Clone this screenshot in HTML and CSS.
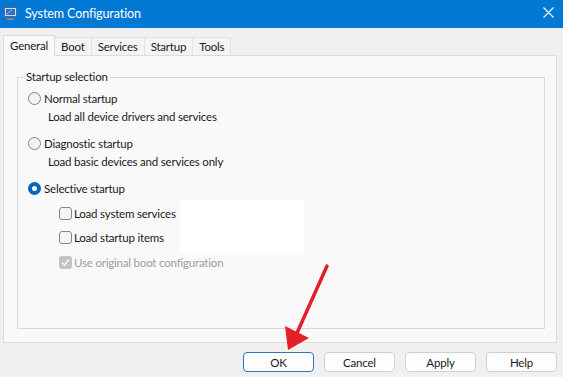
FILE: index.html
```html
<!DOCTYPE html>
<html lang="en">
<head>
    <meta charset="UTF-8">
    <meta name="viewport" content="width=device-width, initial-scale=1.0">
    <title>System Configuration</title>
    <link rel="stylesheet" href="styles.css">
</head>
<body>
    <div class="window">
        <div class="titlebar">
            <svg class="app-icon" width="13" height="13" viewBox="0 0 13 13">
                <rect x="0.5" y="0.5" width="12" height="9" rx="1" fill="#d7dde6" stroke="#56657a"/>
                <rect x="2" y="2" width="9" height="6" fill="#2b6fd6"/>
                <path d="M3 7 L8 3" stroke="#9cc4ff" stroke-width="1"/>
                <rect x="5" y="10" width="3" height="1.5" fill="#56657a"/>
                <rect x="3" y="11.5" width="7" height="1.5" fill="#8793a3"/>
            </svg>
            <span class="title">System Configuration</span>
            <svg class="close" width="11" height="11" viewBox="0 0 11 11">
                <path d="M0.5 0.5 L10.5 10.5 M10.5 0.5 L0.5 10.5" stroke="#fff" stroke-width="1.1"/>
            </svg>
        </div>

        <div class="tabs">
            <div class="tab active">General</div>
            <div class="tab">Boot</div>
            <div class="tab">Services</div>
            <div class="tab">Startup</div>
            <div class="tab">Tools</div>
        </div>

        <div class="panel">
            <fieldset class="group">
                <legend>Startup selection</legend>

                <div class="option first"><span class="radio"></span>Normal startup</div>
                <div class="option-desc">Load all device drivers and services</div>

                <div class="option"><span class="radio"></span>Diagnostic startup</div>
                <div class="option-desc">Load basic devices and services only</div>

                <div class="option"><span class="radio checked"></span>Selective startup</div>

                <div class="check first"><span class="box"></span>Load system services</div>
                <div class="check"><span class="box"></span>Load startup items</div>
                <div class="check disabled">
                    <span class="box checked">
                        <svg width="9" height="9" viewBox="0 0 9 9"><path d="M1 4.6 L3.5 7 L8 1.8" fill="none" stroke="#fff" stroke-width="1.3"/></svg>
                    </span>Use original boot configuration
                </div>
            </fieldset>
        </div>

        <div class="buttons">
            <button class="btn default">OK</button>
            <button class="btn">Cancel</button>
            <button class="btn">Apply</button>
            <button class="btn">Help</button>
        </div>

        <div class="redact"></div>

        <svg class="arrow" width="563" height="377" viewBox="0 0 563 377">
            <path d="M327 266 L297 333" stroke="#e3202a" stroke-width="3.5" stroke-linecap="round"/>
            <polygon points="285,326 309,338 288,350" fill="#e3202a"/>
        </svg>
    </div>
</body>
</html>
```

FILE: styles.css
```css
* {
    margin: 0;
    padding: 0;
    box-sizing: border-box;
}

body {
    font-family: 'Lato', 'Segoe UI', sans-serif;
    font-size: 11.5px;
    letter-spacing: -0.2px;
    color: #1a1a1a;
    background: #f0f0f0;
}

.window {
    position: relative;
    width: 563px;
    height: 377px;
    background: #f0f0f0;
    overflow: hidden;
}

.titlebar {
    height: 28px;
    background: #0078d4;
    display: flex;
    align-items: center;
    padding-left: 4px;
    color: #fff;
}

.app-icon {
    margin-right: 8px;
    margin-top: -1px;
}

.title {
    font-size: 12.5px;
    letter-spacing: -0.1px;
    margin-top: -2px;
}

.close {
    margin-left: auto;
    margin-right: 9px;
    margin-top: -4px;
}

.tabs {
    display: flex;
    align-items: flex-end;
    height: 20px;
    margin-top: 7px;
    padding-left: 3px;
}

.tab {
    height: 18px;
    line-height: 17px;
    padding: 0 6px;
    background: #f4f4f4;
    border: 1px solid #e2e2e2;
    border-bottom: none;
    margin-left: -1px;
}

.tab:first-child {
    margin-left: 0;
}

.tab.active {
    position: relative;
    z-index: 1;
    height: 21px;
    line-height: 19px;
    margin-bottom: -1px;
    padding: 0 6px;
    background: #f9f9f9;
    border-color: #dcdcdc;
}

.panel {
    height: 288px;
    margin: 0 6px 0 3px;
    padding: 13px 11px 0 13px;
    background: #f9f9f9;
    border: 1px solid #dcdcdc;
}

.group {
    height: 260px;
    margin: 0;
    padding: 0 10px;
    border: 1px solid #d8d8d8;
}

.group legend {
    line-height: 16px;
    padding: 0 2px;
    margin-left: -4px;
}

.option,
.option-desc,
.check {
    display: flex;
    align-items: center;
    height: 16px;
}

.option {
    margin-top: 11px;
}

.option.first {
    margin-top: 5px;
}

.option-desc {
    margin-top: 2px;
    padding-left: 20px;
}

.radio {
    width: 13px;
    height: 13px;
    border-radius: 50%;
    border: 1px solid #858585;
    background: #f3f3f3;
    margin-right: 3px;
    flex-shrink: 0;
}

.radio.checked {
    border: 4px solid #0067c0;
    background: #fff;
}

.check {
    padding-left: 31px;
    margin-top: 8px;
}

.check.first {
    margin-top: 9px;
}

.check.disabled {
    margin-top: 9px;
    color: #9d9d9d;
}

.box {
    width: 13px;
    height: 13px;
    border: 1px solid #858585;
    border-radius: 3px;
    background: #f5f5f5;
    margin-right: 2px;
    flex-shrink: 0;
    display: flex;
    align-items: center;
    justify-content: center;
}

.box.checked {
    border: none;
    background: #c4c4c4;
}

.buttons {
    display: flex;
    justify-content: flex-end;
    gap: 10px;
    padding: 9px 6px 0 0;
}

.btn {
    width: 71px;
    height: 20px;
    font-family: inherit;
    font-size: 11.5px;
    letter-spacing: inherit;
    color: #1a1a1a;
    background: #fdfdfd;
    border: 1px solid #d0d0d0;
    border-radius: 4px;
}

.btn.default {
    border-color: #2f74b5;
}

.redact {
    position: absolute;
    left: 180px;
    top: 200px;
    width: 124px;
    height: 53px;
    background: #fff;
}

.arrow {
    position: absolute;
    left: 0;
    top: 0;
    pointer-events: none;
}
```
